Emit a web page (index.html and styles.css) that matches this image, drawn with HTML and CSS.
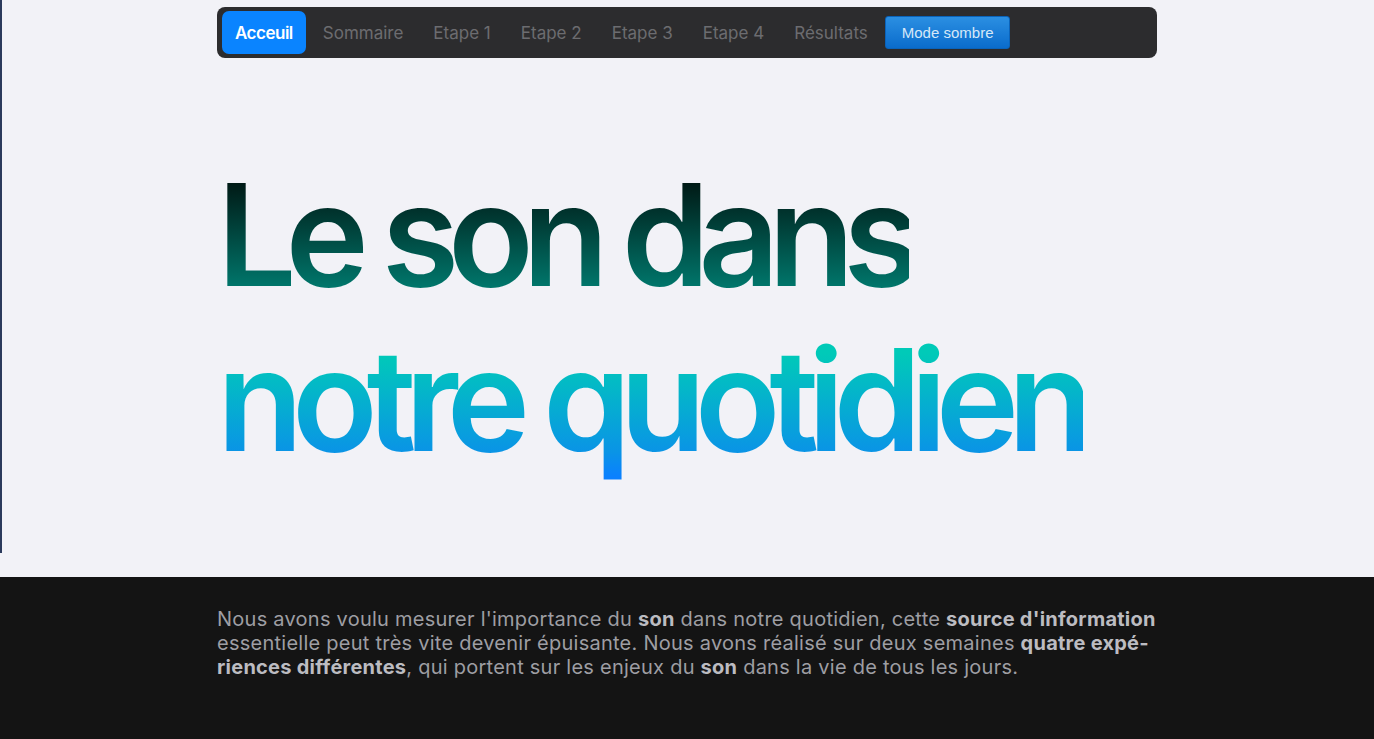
FILE: index.html
```html
<!DOCTYPE html>
<html lang="fr">
<head>
<meta charset="utf-8">
<title>Le son dans notre quotidien</title>
<link rel="stylesheet" href="styles.css">
</head>
<body>
<header class="hero">
  <nav class="nav">
    <a class="nav-link active" href="#">Acceuil</a>
    <a class="nav-link" href="#">Sommaire</a>
    <a class="nav-link" href="#">Etape 1</a>
    <a class="nav-link" href="#">Etape 2</a>
    <a class="nav-link" href="#">Etape 3</a>
    <a class="nav-link" href="#">Etape 4</a>
    <a class="nav-link" href="#">Résultats</a>
    <button class="mode-btn" type="button">Mode sombre</button>
  </nav>
  <h1 class="title">
    <span class="title-line line-dark">Le son dans</span>
    <span class="title-line line-bright">notre quotidien</span>
  </h1>
</header>
<section class="intro">
  <p class="intro-text">Nous avons voulu mesurer l'importance du <strong>son</strong> dans notre quotidien, cette <strong>source d'information</strong> essentielle peut très vite devenir épuisante. Nous avons réalisé sur deux semaines <strong>quatre expé&shy;riences différentes</strong>, qui portent sur les enjeux du <strong>son</strong> dans la vie de tous les jours.</p>
</section>
</body>
</html>
```
FILE: styles.css
```css
* { box-sizing: border-box; }
html, body {
  margin: 0;
  padding: 0;
}
body {
  font-family: Inter, "Noto Sans", sans-serif;
  background: #141414;
  min-height: 739px;
}
.hero {
  background-color: #f2f2f7;
  background-image: linear-gradient(to right, #2b3a5c 2px, transparent 2px);
  background-repeat: no-repeat;
  background-size: 2px 553px;
  padding: 7px 0 95px;
}
.nav {
  width: 940px;
  margin: 0 auto;
  height: 51px;
  background: #2c2c2e;
  border-radius: 8px;
  display: flex;
  align-items: center;
  gap: 4px;
  padding: 0 5px;
}
.nav-link {
  display: flex;
  align-items: center;
  height: 43px;
  padding: 0 13px;
  font-size: 17px;
  color: #6c6c70;
  text-decoration: none;
  border-radius: 7px;
}
.nav-link.active {
  background: #0a84ff;
  color: #ffffff;
  font-weight: 600;
  letter-spacing: -0.5px;
}
.mode-btn {
  height: 33px;
  padding: 0 16px;
  font-family: "Liberation Sans", Arial, sans-serif;
  font-size: 15px;
  color: #d6e8f8;
  background: linear-gradient(to bottom, #2b8fe2, #0a6ccc);
  border: 1px solid #0a63ba;
  border-radius: 3px;
}
.title {
  width: 940px;
  margin: 94px auto 0;
  font-size: 141px;
  font-weight: 580;
  line-height: 165px;
  letter-spacing: -0.08em;
}
.title-line {
  display: block;
  width: max-content;
  -webkit-background-clip: text;
  background-clip: text;
  -webkit-text-fill-color: transparent;
  color: transparent;
}
.line-dark {
  background-image: linear-gradient(to bottom, #001a16 19%, #00766b 82%);
}
.line-bright {
  background-image: linear-gradient(to bottom, #00cab8 22%, #0a94e6 82%, #0a80ff 97%);
}
.intro {
  background: #141414;
  padding: 30px 0 40px;
}
.intro-text {
  width: 940px;
  margin: 0 auto;
  font-size: 20px;
  line-height: 24px;
  letter-spacing: 0.25px;
  color: #9e9ea3;
}
.intro-text strong {
  color: #bcbcc1;
  font-weight: 700;
}
```
